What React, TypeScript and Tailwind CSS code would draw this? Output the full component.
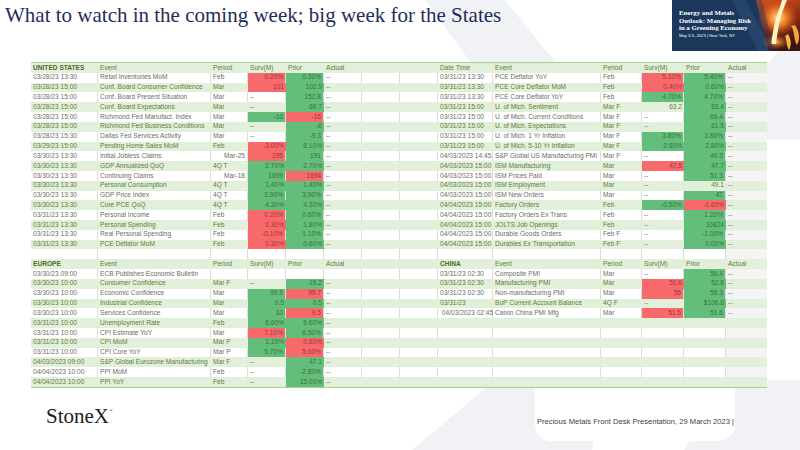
import React from "react";

const US_L: string[][] = [
  ["03/28/23 13:30", "Retail Inventories MoM", "Feb", "r:0.20%", "g:0.30%", "--"],
  ["03/28/23 15:00", "Conf. Board Consumer Confidence", "Mar", "r:101", "g:102.9", "--"],
  ["03/28/23 15:00", "Conf. Board Present Situation", "Mar", "--", "g:152.8", "--"],
  ["03/28/23 15:00", "Conf. Board Expectations", "Mar", "--", "g:69.7", "--"],
  ["03/28/23 15:00", "Richmond Fed Manufact. Index", "Mar", "g:-10", "r:-16", "--"],
  ["03/28/23 15:00", "Richmond Fed Business Conditions", "Mar", "--", "g:-6", "--"],
  ["03/28/23 15:30", "Dallas Fed Services Activity", "Mar", "--", "g:-9.3", "--"],
  ["03/29/23 15:00", "Pending Home Sales MoM", "Feb", "r:-3.00%", "g:8.10%", "--"],
  ["03/30/23 13:30", "Initial Jobless Claims", ">Mar-25", "r:195", "g:191", "--"],
  ["03/30/23 13:30", "GDP Annualized QoQ", "4Q T", "g:2.70%", "g:2.70%", "--"],
  ["03/30/23 13:30", "Continuing Claims", ">Mar-18", "g:1699", "r:1694", "--"],
  ["03/30/23 13:30", "Personal Consumption", "4Q T", "g:1.40%", "g:1.40%", "--"],
  ["03/30/23 13:30", "GDP Price Index", "4Q T", "g:3.90%", "g:3.90%", "--"],
  ["03/30/23 13:30", "Core PCE QoQ", "4Q T", "g:4.30%", "g:4.30%", "--"],
  ["03/31/23 13:30", "Personal Income", "Feb", "r:0.20%", "g:0.60%", "--"],
  ["03/31/23 13:30", "Personal Spending", "Feb", "r:0.30%", "g:1.80%", "--"],
  ["03/31/23 13:30", "Real Personal Spending", "Feb", "r:-0.10%", "g:1.10%", "--"],
  ["03/31/23 13:30", "PCE Deflator MoM", "Feb", "r:0.30%", "g:0.60%", "--"],
];

const EU: string[][] = [
  ["03/30/23 09:00", "ECB Publishes Economic Bulletin", "", "", "", ""],
  ["03/30/23 10:00", "Consumer Confidence", "Mar F", "--", "g:-19.2", "--"],
  ["03/30/23 10:00", "Economic Confidence", "Mar", "g:99.9", "r:99.7", "--"],
  ["03/30/23 10:00", "Industrial Confidence", "Mar", "g:0.5", "g:0.5", "--"],
  ["03/30/23 10:00", "Services Confidence", "Mar", "g:10", "r:9.5", "--"],
  ["03/31/23 10:00", "Unemployment Rate", "Feb", "g:6.60%", "g:6.60%", "--"],
  ["03/31/23 10:00", "CPI Estimate YoY", "Mar", "r:7.10%", "g:8.50%", "--"],
  ["03/31/23 10:00", "CPI MoM", "Mar P", "g:1.10%", "r:0.80%", "--"],
  ["03/31/23 10:00", "CPI Core YoY", "Mar P", "g:5.70%", "r:5.60%", "--"],
  ["04/03/2023 09:00", "S&P Global Eurozone Manufacturing", "Mar F", "--", "g:47.1", "--"],
  ["04/04/2023 10:00", "PPI MoM", "Feb", "--", "g:-2.80%", "--"],
  ["04/04/2023 10:00", "PPI YoY", "Feb", "--", "g:15.00%", "--"],
];

const US_R: string[][] = [
  ["03/31/23 13:30", "PCE Deflator YoY", "Feb", "r:5.10%", "g:5.40%", "--"],
  ["03/31/23 13:30", "PCE Core Deflator MoM", "Feb", "r:0.40%", "g:0.60%", "--"],
  ["03/31/23 13:30", "PCE Core Deflator YoY", "Feb", "g:4.70%", "g:4.70%", "--"],
  ["03/31/23 15:00", "U. of Mich. Sentiment", "Mar F", "n:63.2", "g:63.4", "--"],
  ["03/31/23 15:00", "U. of Mich. Current Conditions", "Mar F", "--", "g:66.4", "--"],
  ["03/31/23 15:00", "U. of Mich. Expectations", "Mar F", "--", "g:61.5", "--"],
  ["03/31/23 15:00", "U. of Mich. 1 Yr Inflation", "Mar F", "g:3.80%", "g:3.80%", "--"],
  ["03/31/23 15:00", "U. of Mich. 5-10 Yr Inflation", "Mar F", "g:2.80%", "g:2.80%", "--"],
  ["04/03/2023 14:45", "S&P Global US Manufacturing PMI", "Mar F", "--", "g:49.3", "--"],
  ["04/03/2023 15:00", "ISM Manufacturing", "Mar", "r:47.5", "g:47.7", "--"],
  ["04/03/2023 15:00", "ISM Prices Paid", "Mar", "--", "g:51.3", "--"],
  ["04/03/2023 15:00", "ISM Employment", "Mar", "--", "n:49.1", "--"],
  ["04/03/2023 15:00", "ISM New Orders", "Mar", "--", "g:47", "--"],
  ["04/04/2023 15:00", "Factory Orders", "Feb", "g:-0.50%", "r:-1.60%", "--"],
  ["04/04/2023 15:00", "Factory Orders Ex Trans", "Feb", "--", "g:1.20%", "--"],
  ["04/04/2023 15:00", "JOLTS Job Openings", "Feb", "--", "g:10824", "--"],
  ["04/04/2023 15:00", "Durable Goods Orders", "Feb F", "--", "g:-1.00%", "--"],
  ["04/04/2023 15:00", "Durables Ex Transportation", "Feb F", "--", "g:0.00%", "--"],
];

const CN: string[][] = [
  ["03/31/23 02:30", "Composite PMI", "Mar", "--", "g:56.4", "--"],
  ["03/31/23 02:30", "Manufacturing PMI", "Mar", "r:51.6", "g:52.6", "--"],
  ["03/31/23 02:30", "Non-manufacturing PMI", "Mar", "r:55", "g:56.3", "--"],
  ["03/31/23", "BoP Current Account Balance", "4Q F", "--", "g:$106.8", "--"],
  ["\u00a004/03/2023 02:45", "Caixin China PMI Mfg", "Mar", "r:51.5", "g:51.6", "--"],
];

const BLANK6 = ["", "", "", "", "", ""];
const HDR_US = ["b:UNITED STATES", "Event", "Period", "Surv(M)", "Prior", "Actual"];
const HDR_EU = ["b:EUROPE", "Event", "Period", "Surv(M)", "Prior", "Actual"];
const HDR_RUS = ["Date Time", "Event", "Period", "Surv(M)", "Prior", "Actual"];
const HDR_CN = ["b:CHINA", "Event", "Period", "Surv(M)", "Prior", "Actual"];

function buildRows(): string[][] {
  const rows: string[][] = [];
  for (let i = 0; i < 33; i++) {
    let l: string[];
    let r: string[];
    if (i === 0) l = HDR_US;
    else if (i <= 18) l = US_L[i - 1];
    else if (i === 19) l = BLANK6;
    else if (i === 20) l = HDR_EU;
    else l = EU[i - 21];
    if (i === 0) r = HDR_RUS;
    else if (i <= 18) r = US_R[i - 1];
    else if (i === 19) r = BLANK6;
    else if (i === 20) r = HDR_CN;
    else if (i <= 25) r = CN[i - 21];
    else r = BLANK6;
    rows.push([...l, "", "", ...r]);
  }
  return rows;
}

function Cell({ v, odd, col }: { v: string; odd: boolean; col: number }) {
  let text = v;
  let cls = "flex items-center whitespace-nowrap px-[2px] ";
  if (v.startsWith("r:")) {
    text = v.slice(2);
    cls += "justify-end bg-[#f8696b] text-[#9a3934] ";
  } else if (v.startsWith("g:")) {
    text = v.slice(2);
    cls += "justify-end bg-[#63be7b] text-[#3a7336] ";
  } else if (v.startsWith("n:")) {
    text = v.slice(2);
    cls += "justify-end ";
  } else if (v.startsWith(">")) {
    text = v.slice(1);
    cls += "justify-end ";
  } else if (v.startsWith("b:")) {
    text = v.slice(2);
    cls += "font-bold text-[#4d6b26] ";
  }
  if (odd && col < 13) cls += "border-r border-[#dcdcdc] ";
  if (odd && col === 13) cls += "bg-[#f4f4f4] ";
  return <div className={cls}>{text}</div>;
}

function Table() {
  const rows = buildRows();
  return (
    <div className="ml-[31px] w-[736px] border-y border-[#a9d08e] font-['Liberation_Sans',Arial,sans-serif] text-[6.6px] leading-none">
      {rows.map((r, i) => {
        const odd = i % 2 === 1;
        return (
          <div
            key={i}
            className={
              "grid h-[9.82px] grid-cols-[67px_113px_37px_38px_38px_38px_38px_38px_55px_108px_41px_42px_42px_41px] " +
              (odd ? "bg-white text-[#6d6d66]" : "bg-[#e2efda] text-[#5f7f36]")
            }
          >
            {r.map((v, j) => (
              <Cell key={j} v={v} odd={odd} col={j} />
            ))}
          </div>
        );
      })}
    </div>
  );
}

function Watermark() {
  return (
    <svg className="absolute left-0 top-0" width="800" height="450" viewBox="0 0 800 450">
      <g fill="#f1f2f5">
        <polygon points="425,0 505,0 610,130 520,130" />
        <polygon points="800,25 800,140 705,140" />
        <polygon points="495,380 605,380 592,450 412,450" />
        <polygon points="728,380 800,380 800,450 684,450" />
      </g>
      <rect x="535" y="375" width="200" height="66" rx="16" fill="#ffffff" />
    </svg>
  );
}

function Banner() {
  return (
    <div className="relative ml-auto h-[51px] w-[128px] shrink-0 overflow-hidden bg-[#1b375c]">
      <svg className="absolute left-0 top-0" width="128" height="51" viewBox="0 0 128 51">
        <defs>
          <linearGradient id="fireBg" x1="0" y1="0" x2="0.3" y2="1">
            <stop offset="0" stopColor="#d8561c" />
            <stop offset="0.55" stopColor="#8a2a12" />
            <stop offset="1" stopColor="#3a1510" />
          </linearGradient>
          <radialGradient id="glow" cx="0.5" cy="0.5" r="0.5">
            <stop offset="0" stopColor="#ffe59a" />
            <stop offset="0.4" stopColor="#f6912f" stopOpacity="0.9" />
            <stop offset="1" stopColor="#e0581c" stopOpacity="0" />
          </radialGradient>
          <radialGradient id="glow2" cx="0.5" cy="0.5" r="0.5">
            <stop offset="0" stopColor="#ffb347" />
            <stop offset="1" stopColor="#c8421a" stopOpacity="0" />
          </radialGradient>
        </defs>
        <polygon points="60,0 74,0 100,51 86,51" fill="#2e5079" opacity="0.55" />
        <polygon points="84,0 128,0 128,51 97,51" fill="url(#fireBg)" />
        <ellipse cx="106" cy="18" rx="20" ry="18" fill="url(#glow)" />
        <ellipse cx="104" cy="42" rx="14" ry="8" fill="url(#glow2)" />
        <path d="M110 0 C108 8 104 16 102 26 C101 32 100 38 99 44 L104 44 C105 36 106 30 107 24 C109 15 112 7 115 0 Z" fill="#fff3c4" />
        <path d="M119 26 C123 31 121 38 125 45 C128 40 128 32 123 25 Z" fill="#f7a23c" />
        <path d="M113 36 C115 40 114 45 117 50 C120 45 119 39 116 34 Z" fill="#f9b64a" />
        <polygon points="84,0 90,0 102,51 97,51" fill="#1b375c" opacity="0.4" />
      </svg>
      <div className="relative pl-[7px] pt-[9px] text-white">
        <div className="whitespace-nowrap font-['Liberation_Serif',serif] text-[6.8px] font-bold leading-[7.6px]">
          <div>Energy and Metals</div>
          <div>Outlook: Managing Risk</div>
          <div>in a Greening Economy</div>
        </div>
        <div className="whitespace-nowrap font-['Liberation_Sans',Arial,sans-serif] text-[4.2px] leading-[7.6px]">
          May 3-5, 2023 | New York, NY
        </div>
      </div>
    </div>
  );
}

export default function App() {
  return (
    <div className="relative h-[450px] w-[800px] overflow-hidden bg-white">
      <Watermark />
      <div className="relative flex h-full flex-col">
        <div className="flex h-[62px] items-start">
          <h1 className="whitespace-nowrap pl-[5px] pt-[5px] font-['Liberation_Serif',serif] text-[21px] font-normal leading-[21px] text-[#1f2d5b]">
            What to watch in the coming week; big week for the States
          </h1>
          <Banner />
        </div>
        <Table />
        <div className="flex flex-1 items-start">
          <div className="ml-[46px] mt-[18px] font-['Liberation_Serif',serif] text-[21px] leading-[21px] text-[#1d1d1b]">
            StoneX<span className="relative top-[-11px] text-[5px]">®</span>
          </div>
          <p className="ml-auto mr-[66px] mt-[29px] whitespace-nowrap font-['Liberation_Sans',Arial,sans-serif] text-[7.6px] leading-[10px] text-[#404040]">
            Precious Metals Front Desk Presentation, 29 March 2023 |
          </p>
        </div>
      </div>
    </div>
  );
}
